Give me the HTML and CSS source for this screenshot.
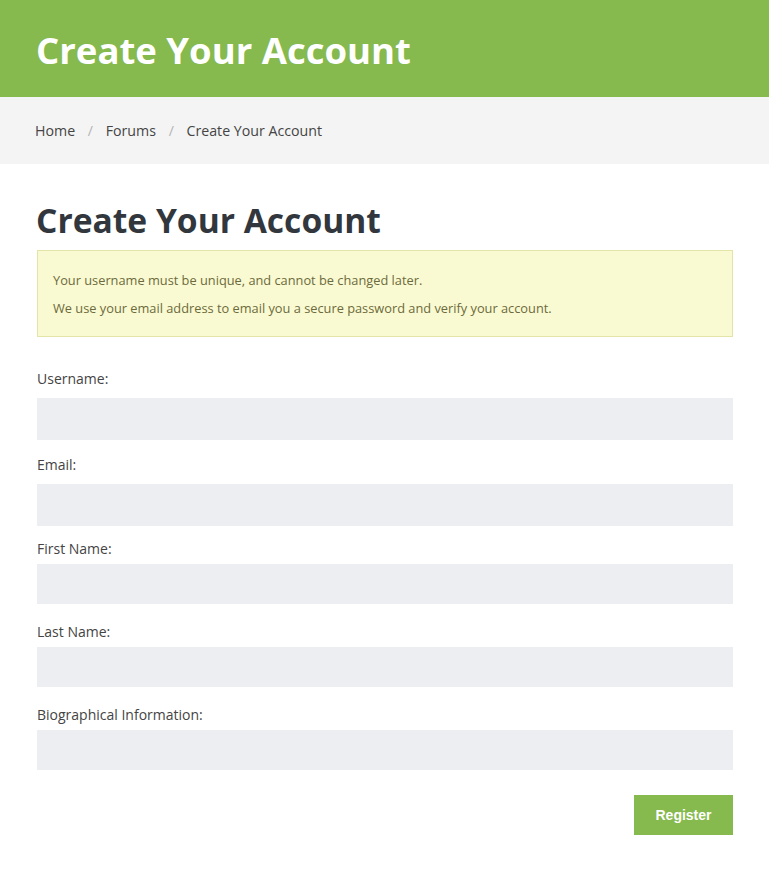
FILE: index.html
```html
<!DOCTYPE html>
<html lang="en">
<head>
    <meta charset="UTF-8">
    <meta name="viewport" content="width=device-width, initial-scale=1.0">
    <title>Create Your Account</title>
    <link rel="stylesheet" href="styles.css">
</head>
<body>

    <!-- page title bar -->
    <header class="page-header">
        <div class="page-title">Create Your Account</div>
    </header>

    <!-- breadcrumbs -->
    <nav class="breadcrumbs">
        <a href="#">Home</a>
        <span class="sep">/</span>
        <a href="#">Forums</a>
        <span class="sep">/</span>
        <span class="current">Create Your Account</span>
    </nav>

    <main class="content">
        <h1>Create Your Account</h1>

        <div class="notice">
            <p>Your username must be unique, and cannot be changed later.</p>
            <p>We use your email address to email you a secure password and verify your account.</p>
        </div>

        <form class="register-form">
            <fieldset class="group">
                <div class="field">
                    <label for="user_login">Username:</label>
                    <input type="text" id="user_login">
                </div>
                <div class="field">
                    <label for="user_email">Email:</label>
                    <input type="text" id="user_email">
                </div>
            </fieldset>

            <fieldset class="group group-profile">
                <div class="field">
                    <label for="first_name">First Name:</label>
                    <input type="text" id="first_name">
                </div>
                <div class="field">
                    <label for="last_name">Last Name:</label>
                    <input type="text" id="last_name">
                </div>
                <div class="field">
                    <label for="description">Biographical Information:</label>
                    <input type="text" id="description">
                </div>
            </fieldset>

            <div class="actions">
                <button type="button">Register</button>
            </div>
        </form>
    </main>

</body>
</html>
```

FILE: styles.css
```css
/* base */
body {
    font-family: "Open Sans", "Liberation Sans", sans-serif;
    margin: 0;
    padding: 0;
    background-color: #fff;
    color: #444;
}

a {
    color: inherit;
    text-decoration: none;
}

/* green title bar */
.page-header {
    background-color: #86b94e;
    padding: 27px 36px 24px;
}

.page-title {
    color: #fff;
    font-size: 36.5px;
    font-weight: 700;
    line-height: 46px;
}

/* breadcrumbs */
.breadcrumbs {
    background-color: #f4f4f4;
    padding: 24px 35px 23px;
    font-size: 14.2px;
    line-height: 20px;
    color: #444;
}

.breadcrumbs .sep {
    color: #b5b5b5;
    margin: 0 9px;
}

/* main content */
.content {
    padding: 35px 36px 40px 37px;
}

h1 {
    margin: 0 0 9px -1px;
    font-size: 33.6px;
    font-weight: 700;
    line-height: 42px;
    color: #31373d;
}

.notice {
    background-color: #fafad2;
    border: 1px solid #e4e4a8;
    padding: 15px 15px 14px;
    color: #6c6a3c;
    font-size: 12.8px;
    line-height: 28px;
}

.notice p {
    margin: 0;
}

/* form */
.register-form {
    margin-top: 32px;
}

.group {
    border: 0;
    margin: 0;
    padding: 0;
}

.field {
    display: flex;
    flex-direction: column;
    gap: 9px;
    margin-top: 15px;
}

.field:first-child {
    margin-top: 0;
}

.field label {
    font-size: 14px;
    line-height: 20px;
    color: #444;
}

.field input {
    height: 42px;
    box-sizing: border-box;
    border: 0;
    background-color: #edeef2;
    padding: 0 10px;
    font-family: inherit;
    font-size: 14px;
}

.group-profile {
    margin-top: 13px;
}

.group-profile .field {
    gap: 5px;
    margin-top: 18px;
}

.group-profile .field:first-child {
    margin-top: 0;
}

.group-profile .field input {
    height: 40px;
}

.actions {
    display: flex;
    justify-content: flex-end;
    margin-top: 25px;
}

.actions button {
    width: 99px;
    height: 40px;
    border: 0;
    background-color: #86b94e;
    color: #fff;
    font-family: "Liberation Sans", Arial, sans-serif;
    font-size: 14px;
    font-weight: 700;
    cursor: pointer;
}
```
